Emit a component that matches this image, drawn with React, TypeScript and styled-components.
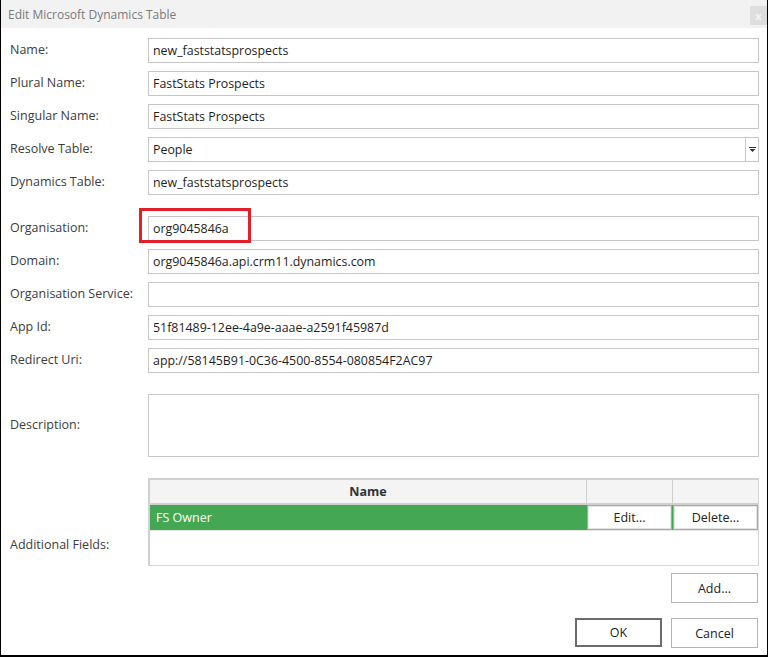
import React from "react";
import styled, { createGlobalStyle } from "styled-components";

const GlobalStyle = createGlobalStyle`
  html, body {
    margin: 0;
    padding: 0;
    background: #ffffff;
  }
  body {
    font-family: "Segoe UI", "Open Sans", "Noto Sans", sans-serif;
  }
`;

const StyledWindow = styled.div`
  width: 768px;
  height: 657px;
  box-sizing: border-box;
  border-left: 1px solid #000;
  border-right: 1px solid #000;
  border-bottom: 2px solid #000;
  background: #fff;
  display: flex;
  flex-direction: column;
`;

const StyledTitleBar = styled.div`
  height: 28px;
  background: #f2f2f2;
  display: flex;
  align-items: center;
  justify-content: space-between;
  padding: 0 0 0 7px;
  color: #7a7a7a;
  font-size: 12px;
  flex-shrink: 0;
`;

const StyledClose = styled.div`
  width: 17px;
  height: 19px;
  margin-top: 3px;
  background: #dedede;
  color: #f4f4f4;
  font-size: 11px;
  font-weight: bold;
  display: flex;
  align-items: center;
  justify-content: center;
`;

const StyledBody = styled.div`
  display: flex;
  flex-direction: column;
  padding: 10px 8px 0 9px;
`;

const StyledRow = styled.div<{ $gap: number }>`
  display: grid;
  grid-template-columns: 138px 1fr;
  align-items: center;
  margin-top: ${(p) => p.$gap}px;
  position: relative;
`;

const StyledLabel = styled.div<{ $drop?: number }>`
  font-size: 12.5px;
  color: #3c3c3c;
  padding-bottom: 2px;
  padding-top: ${(p) => p.$drop ?? 0}px;
`;

const StyledInput = styled.div<{ $tall?: boolean }>`
  height: ${(p) => (p.$tall ? 63 : 25)}px;
  box-sizing: border-box;
  border: 1px solid #c6c6c6;
  display: flex;
  align-items: center;
  padding-left: 4px;
  font-size: 12.4px;
  color: #1e1e1e;
  position: relative;
`;

const StyledDropButton = styled.div`
  position: absolute;
  right: 0;
  top: 0;
  bottom: 0;
  width: 12px;
  border-left: 1px solid #c6c6c6;
  display: flex;
  align-items: center;
  justify-content: center;
`;

const StyledHighlight = styled.div`
  position: absolute;
  left: 129px;
  top: -8px;
  width: 112px;
  height: 35px;
  box-sizing: border-box;
  border: 3px solid #e3202a;
`;

const StyledFieldsArea = styled.div`
  display: flex;
  flex-direction: column;
  align-items: flex-end;
`;

const StyledTable = styled.div`
  width: 100%;
  height: 88px;
  box-sizing: border-box;
  border: 1px solid #d6d6d6;
  border-top: 2px solid #d0d0d0;
  border-left: 2px solid #d0d0d0;
`;

const StyledGridRow = styled.div<{ $green?: boolean }>`
  display: grid;
  grid-template-columns: 1fr 86px 86px;
  height: ${(p) => (p.$green ? 25 : 23)}px;
  background: ${(p) => (p.$green ? "#43a753" : "#f4f4f4")};
  border-bottom: ${(p) => (p.$green ? "1px solid #e6e6e6" : "2px solid #cfcfcf")};
`;

const StyledHeaderCell = styled.div<{ $divider?: boolean }>`
  display: flex;
  align-items: center;
  justify-content: center;
  font-size: 12.5px;
  font-weight: bold;
  color: #333;
  border-left: ${(p) => (p.$divider ? "1px solid #cfcfcf" : "none")};
`;

const StyledCell = styled.div`
  display: flex;
  align-items: center;
  padding-left: 6px;
  color: #fff;
  font-size: 12.5px;
`;

const StyledCellButton = styled.div`
  background: #fff;
  border: 1px solid #a9a9a9;
  box-shadow: inset 0 0 0 1px #e4e4e4;
  display: flex;
  align-items: center;
  justify-content: center;
  font-size: 12.5px;
  color: #222;
  margin-left: 1px;
`;

const StyledButton = styled.div<{ $primary?: boolean }>`
  width: 87px;
  height: ${(p) => (p.$primary ? 29 : 30)}px;
  box-sizing: border-box;
  border: ${(p) => (p.$primary ? "2px solid #6b6b6b" : "1px solid #b4b4b4")};
  background: #fff;
  display: flex;
  align-items: center;
  justify-content: center;
  font-size: 12.5px;
  color: #222;
`;

const StyledAddRow = styled.div`
  margin-top: 7px;
  padding-right: 1px;
`;

const StyledFooter = styled.div`
  display: flex;
  justify-content: flex-end;
  gap: 9px;
  margin-top: 15px;
  padding-right: 1px;
`;

const DropArrow = () => (
  <svg width="7" height="5" viewBox="0 0 7 5">
    <rect x="0" y="0" width="7" height="1" fill="#333" />
    <polygon points="0.5,2 6.5,2 3.5,5" fill="#333" />
  </svg>
);

type Field = {
  label: string;
  value: string;
  gap: number;
  drop?: boolean;
  mark?: boolean;
};

const fields: Field[] = [
  { label: "Name:", value: "new_faststatsprospects", gap: 0 },
  { label: "Plural Name:", value: "FastStats Prospects", gap: 8 },
  { label: "Singular Name:", value: "FastStats Prospects", gap: 8 },
  { label: "Resolve Table:", value: "People", gap: 8, drop: true },
  { label: "Dynamics Table:", value: "new_faststatsprospects", gap: 8 },
  { label: "Organisation:", value: "org9045846a", gap: 21, mark: true },
  { label: "Domain:", value: "org9045846a.api.crm11.dynamics.com", gap: 8 },
  { label: "Organisation Service:", value: "", gap: 8 },
  { label: "App Id:", value: "51f81489-12ee-4a9e-aaae-a2591f45987d", gap: 8 },
  { label: "Redirect Uri:", value: "app://58145B91-0C36-4500-8554-080854F2AC97", gap: 8 },
];

export default function App() {
  return (
    <>
      <GlobalStyle />
      <StyledWindow>
        <StyledTitleBar>
          <span>Edit Microsoft Dynamics Table</span>
          <StyledClose>x</StyledClose>
        </StyledTitleBar>
        <StyledBody>
          {fields.map((f) => (
            <StyledRow key={f.label} $gap={f.gap}>
              <StyledLabel>{f.label}</StyledLabel>
              <StyledInput>
                {f.value}
                {f.drop && (
                  <StyledDropButton>
                    <DropArrow />
                  </StyledDropButton>
                )}
              </StyledInput>
              {f.mark && <StyledHighlight />}
            </StyledRow>
          ))}
          <StyledRow $gap={21}>
            <StyledLabel>Description:</StyledLabel>
            <StyledInput $tall />
          </StyledRow>
          <StyledRow $gap={21}>
            <StyledLabel $drop={9}>Additional Fields:</StyledLabel>
            <StyledFieldsArea>
              <StyledTable>
                <StyledGridRow>
                  <StyledHeaderCell>Name</StyledHeaderCell>
                  <StyledHeaderCell $divider />
                  <StyledHeaderCell $divider />
                </StyledGridRow>
                <StyledGridRow $green>
                  <StyledCell>FS Owner</StyledCell>
                  <StyledCellButton>Edit...</StyledCellButton>
                  <StyledCellButton>Delete...</StyledCellButton>
                </StyledGridRow>
              </StyledTable>
              <StyledAddRow>
                <StyledButton>Add...</StyledButton>
              </StyledAddRow>
            </StyledFieldsArea>
          </StyledRow>
          <StyledFooter>
            <StyledButton $primary>OK</StyledButton>
            <StyledButton>Cancel</StyledButton>
          </StyledFooter>
        </StyledBody>
      </StyledWindow>
    </>
  );
}
